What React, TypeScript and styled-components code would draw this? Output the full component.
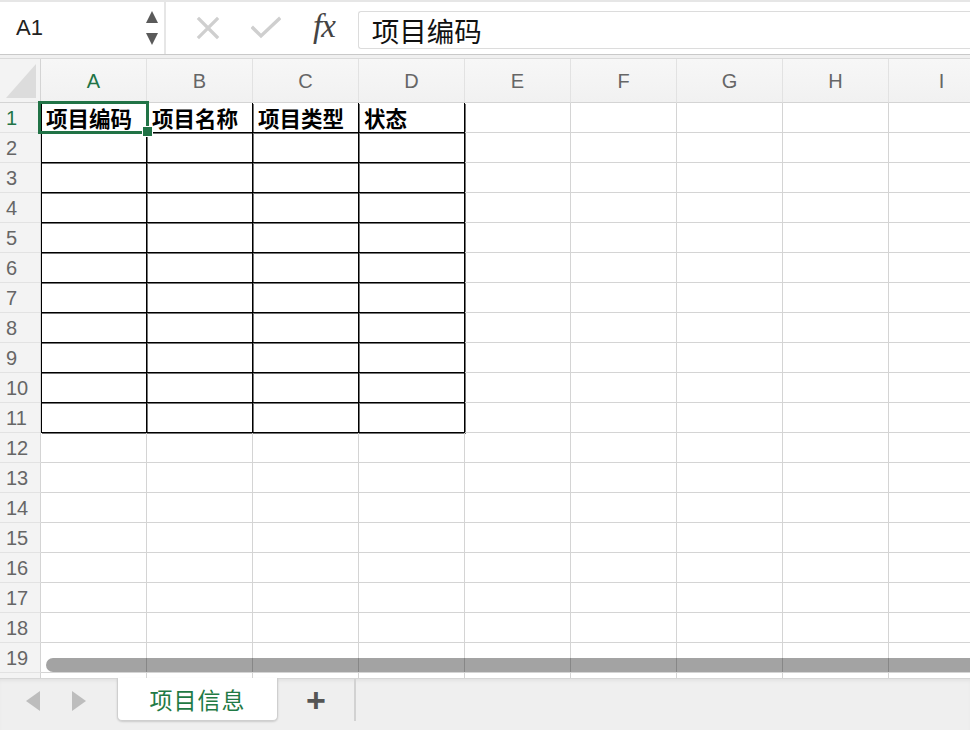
import React from "react";
import styled, { createGlobalStyle } from "styled-components";

const GRID_LINE = `#d4d4d4`;
const HEADER_BG = `#f3f3f3`;
const GREEN = `#217346`;
const CJK = `"Liberation Sans", "Noto Sans CJK SC", sans-serif`;

const COLUMNS = ["A", "B", "C", "D", "E", "F", "G", "H", "I"];
const ROW_COUNT = 20;
const VISIBLE_LABELS = 19;
const HEADERS = ["项目编码", "项目名称", "项目类型", "状态"];
const TABLE_COLS = 4;
const TABLE_ROWS = 11;

const GlobalStyle = createGlobalStyle`
  html, body {
    margin: 0;
    padding: 0;
    background: #ffffff;
    font-family: ${CJK};
    overflow: hidden;
  }
`;

const Page = styled.div`
  width: 970px;
  height: 730px;
  display: flex;
  flex-direction: column;
  overflow: hidden;
`;

const FormulaBar = styled.div`
  display: flex;
  gap: 2px;
  height: 52px;
  padding-top: 2px;
  background: #e6e6e6;
  border-bottom: 1px solid #c9c9c9;
`;

const NameBox = styled.div`
  width: 164px;
  background: #ffffff;
  display: flex;
  align-items: center;
  justify-content: space-between;
  padding: 0 6px 0 16px;
  box-sizing: border-box;
  font-size: 22px;
  color: #222;
`;

const Spinner = styled.div`
  display: flex;
  flex-direction: column;
  gap: 10px;
`;

const Triangle = styled.div<{ $dir: "up" | "down" | "left" | "right"; $color: string; $size: number }>`
  width: 0;
  height: 0;
  ${({ $dir, $color, $size }) =>
    $dir === "up"
      ? `border-left: ${$size * 0.55}px solid transparent; border-right: ${$size * 0.55}px solid transparent; border-bottom: ${$size}px solid ${$color};`
      : $dir === "down"
      ? `border-left: ${$size * 0.55}px solid transparent; border-right: ${$size * 0.55}px solid transparent; border-top: ${$size}px solid ${$color};`
      : $dir === "left"
      ? `border-top: ${$size * 0.75}px solid transparent; border-bottom: ${$size * 0.75}px solid transparent; border-right: ${$size}px solid ${$color};`
      : `border-top: ${$size * 0.75}px solid transparent; border-bottom: ${$size * 0.75}px solid transparent; border-left: ${$size}px solid ${$color};`}
`;

const FormulaArea = styled.div`
  flex: 1;
  background: #ffffff;
  display: flex;
  align-items: center;
  padding-left: 26px;
`;

const IconButton = styled.div`
  width: 32px;
  height: 32px;
  display: flex;
  align-items: center;
  justify-content: center;
  margin-right: 26px;
`;

const Fx = styled.div`
  font-family: "Liberation Serif", "DejaVu Serif", serif;
  font-style: italic;
  font-size: 33px;
  color: #444;
  margin: 0 23px 0 5px;
  padding-bottom: 4px;
  letter-spacing: -1px;
`;

const FormulaInput = styled.div`
  flex: 1;
  align-self: stretch;
  margin: 9px 0 5px 0;
  border: 1px solid #dcdcdc;
  border-right: none;
  border-radius: 3px 0 0 3px;
  display: flex;
  align-items: center;
  padding-left: 13px;
  font-size: 27.5px;
  color: #111;
`;

const Gap = styled.div`
  height: 3px;
  background: #f0f0f0;
  border-bottom: 1px solid #dadada;
`;

const Sheet = styled.div`
  position: relative;
  flex: 1;
  overflow: hidden;
  display: grid;
  grid-template-columns: 41px repeat(${COLUMNS.length}, 106px);
  grid-template-rows: 44px repeat(${ROW_COUNT}, 30px);
  align-content: start;
`;

const Corner = styled.div`
  background: ${HEADER_BG};
  border-right: 1px solid ${GRID_LINE};
  border-bottom: 1px solid ${GRID_LINE};
  position: relative;
  &::after {
    content: "";
    position: absolute;
    right: 4px;
    bottom: 4px;
    width: 0;
    height: 0;
    border-left: 30px solid transparent;
    border-bottom: 34px solid #dcdcdc;
  }
`;

const ColHeader = styled.div<{ $active: boolean }>`
  background: linear-gradient(#f7f7f7, #f1f1f1);
  border-right: 1px solid #e2e2e2;
  border-bottom: 1px solid ${GRID_LINE};
  display: flex;
  align-items: center;
  justify-content: center;
  padding-top: 2px;
  font-family: "Liberation Sans", sans-serif;
  font-size: 20px;
  color: ${({ $active }) => ($active ? GREEN : "#666")};
`;

const RowHeader = styled.div<{ $active: boolean }>`
  background: ${HEADER_BG};
  border-right: 1px solid ${GRID_LINE};
  border-bottom: 1px solid #e2e2e2;
  display: flex;
  align-items: center;
  padding: 2px 0 0 6px;
  font-family: "Liberation Sans", sans-serif;
  font-size: 20px;
  color: ${({ $active }) => ($active ? GREEN : "#666")};
`;

const Cell = styled.div<{ $boxed: boolean; $firstCol: boolean }>`
  position: relative;
  border-right: 1px solid ${({ $boxed }) => ($boxed ? "#000" : GRID_LINE)};
  border-bottom: 1px solid ${({ $boxed }) => ($boxed ? "#000" : GRID_LINE)};
  box-shadow: ${({ $boxed, $firstCol }) =>
    !$boxed
      ? "none"
      : $firstCol
      ? "inset 1px 0 0 #000, 1px 1px 0 rgba(0,0,0,0.55)"
      : "1px 1px 0 rgba(0,0,0,0.55)"};
  display: flex;
  align-items: center;
  padding: 0 0 0 5px;
  font-family: ${CJK};
  font-weight: 700;
  font-size: 21.5px;
  color: #000;
  white-space: nowrap;
`;

const Selection = styled.div`
  position: absolute;
  left: -3px;
  top: -2px;
  right: -3px;
  bottom: -2px;
  border: 3px solid ${GREEN};
  pointer-events: none;
  z-index: 2;
`;

const FillHandle = styled.div`
  position: absolute;
  right: -7px;
  bottom: -6px;
  width: 9px;
  height: 9px;
  background: ${GREEN};
  border: 1px solid #fff;
  z-index: 3;
`;

const ScrollThumb = styled.div`
  position: absolute;
  left: 46px;
  right: -20px;
  top: 599px;
  height: 14px;
  border-radius: 7px;
  background: rgba(0, 0, 0, 0.36);
  z-index: 4;
`;

const Footer = styled.div`
  height: 51px;
  background: #efefef;
  border-top: 1px solid #d6d6d6;
  box-shadow: inset 0 3px 4px -2px rgba(0, 0, 0, 0.08);
  display: flex;
  align-items: flex-start;
`;

const NavArrows = styled.div`
  width: 117px;
  height: 44px;
  display: flex;
  align-items: center;
  gap: 32px;
  padding-left: 26px;
  box-sizing: border-box;
`;

const Tab = styled.div`
  width: 161px;
  height: 43px;
  margin-top: -1px;
  background: #fff;
  border: 1px solid #cfcfcf;
  border-top: none;
  border-radius: 0 0 5px 5px;
  box-shadow: 0 1px 2px rgba(0, 0, 0, 0.15);
  box-sizing: border-box;
  display: flex;
  align-items: center;
  justify-content: center;
  font-size: 23px;
  color: #1f7a45;
  letter-spacing: 1px;
`;

const AddTab = styled.div`
  width: 76px;
  height: 42px;
  display: flex;
  align-items: center;
  justify-content: center;
  border-right: 2px solid #d2d2d2;
  font-family: "Liberation Sans", sans-serif;
  font-size: 34px;
  font-weight: 700;
  color: #555;
`;

export default function App(): JSX.Element {
  const rows = Array.from({ length: ROW_COUNT }, (_, i) => i + 1);

  return (
    <Page>
      <GlobalStyle />
      <FormulaBar>
        <NameBox>
          A1
          <Spinner>
            <Triangle $dir="up" $color="#5a5a5a" $size={12} />
            <Triangle $dir="down" $color="#5a5a5a" $size={12} />
          </Spinner>
        </NameBox>
        <FormulaArea>
          <IconButton>
            <svg width="24" height="24" viewBox="0 0 24 24">
              <path d="M3 3 L21 21 M21 3 L3 21" stroke="#cfcfcf" strokeWidth="3.2" strokeLinecap="square" />
            </svg>
          </IconButton>
          <IconButton>
            <svg width="30" height="24" viewBox="0 0 30 24">
              <path d="M2 12 L10 20 L28 3" stroke="#cfcfcf" strokeWidth="3.4" fill="none" strokeLinecap="square" />
            </svg>
          </IconButton>
          <Fx>fx</Fx>
          <FormulaInput>项目编码</FormulaInput>
        </FormulaArea>
      </FormulaBar>
      <Gap />
      <Sheet>
        <Corner />
        {COLUMNS.map((c, ci) => (
          <ColHeader key={c} $active={ci === 0}>
            {c}
          </ColHeader>
        ))}
        {rows.map((r) => (
          <React.Fragment key={r}>
            <RowHeader $active={r === 1}>{r <= VISIBLE_LABELS ? r : null}</RowHeader>
            {COLUMNS.map((c, ci) => {
              const boxed = r <= TABLE_ROWS && ci < TABLE_COLS;
              return (
                <Cell key={c} $boxed={boxed} $firstCol={ci === 0}>
                  {r === 1 && ci < HEADERS.length ? HEADERS[ci] : null}
                  {r === 1 && ci === 0 ? (
                    <Selection>
                      <FillHandle />
                    </Selection>
                  ) : null}
                </Cell>
              );
            })}
          </React.Fragment>
        ))}
        <ScrollThumb />
      </Sheet>
      <Footer>
        <NavArrows>
          <Triangle $dir="left" $color="#bdbdbd" $size={14} />
          <Triangle $dir="right" $color="#bdbdbd" $size={14} />
        </NavArrows>
        <Tab>项目信息</Tab>
        <AddTab>+</AddTab>
      </Footer>
    </Page>
  );
}
